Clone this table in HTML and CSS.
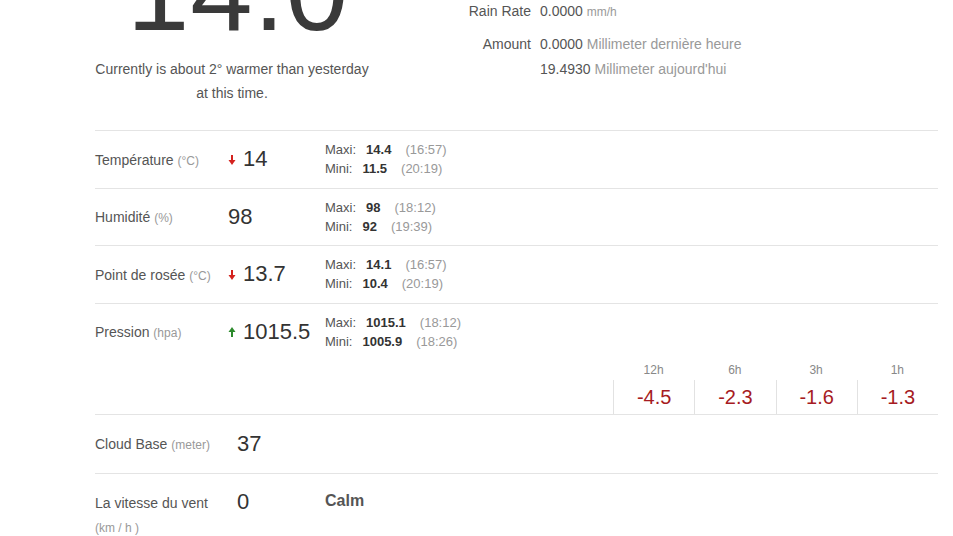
FILE: index.html
```html
<!DOCTYPE html>
<html lang="fr">
<head>
<meta charset="utf-8">
<title>Station météo</title>
<link rel="stylesheet" href="styles.css">
</head>
<body>
<div class="page">
  <section class="top">
    <div class="now">
      <div class="big">14.0</div>
      <p class="compare">Currently is about 2° warmer than yesterday<br>at this time.</p>
    </div>
    <div class="rain">
      <div class="rain-row rain-first"><span class="rlabel">Rain Rate</span><span class="rval">0.0000 <span class="unit">mm/h</span></span></div>
      <div class="rain-row rain-gap"><span class="rlabel">Amount</span><span class="rval">0.0000 <span class="unit-l">Millimeter dernière heure</span></span></div>
      <div class="rain-row"><span class="rlabel"></span><span class="rval">19.4930 <span class="unit-l">Millimeter aujourd'hui</span></span></div>
    </div>
  </section>

  <div class="row">
    <div class="label">Température <span class="unit">(°C)</span></div>
    <div class="value"><svg class="arrow down" width="8" height="10" viewBox="0 0 8 10"><path d="M4 0v5.5" stroke="currentColor" stroke-width="2"/><path d="M0.5 5h7L4 10z" fill="currentColor"/></svg>14</div>
    <div class="mm">
      <div>Maxi:<b>14.4</b><span class="time">(16:57)</span></div>
      <div>Mini:<b>11.5</b><span class="time">(20:19)</span></div>
    </div>
  </div>

  <div class="row">
    <div class="label">Humidité <span class="unit">(%)</span></div>
    <div class="value">98</div>
    <div class="mm">
      <div>Maxi:<b>98</b><span class="time">(18:12)</span></div>
      <div>Mini:<b>92</b><span class="time">(19:39)</span></div>
    </div>
  </div>

  <div class="row">
    <div class="label">Point de rosée <span class="unit">(°C)</span></div>
    <div class="value"><svg class="arrow down" width="8" height="10" viewBox="0 0 8 10"><path d="M4 0v5.5" stroke="currentColor" stroke-width="2"/><path d="M0.5 5h7L4 10z" fill="currentColor"/></svg>13.7</div>
    <div class="mm">
      <div>Maxi:<b>14.1</b><span class="time">(16:57)</span></div>
      <div>Mini:<b>10.4</b><span class="time">(20:19)</span></div>
    </div>
  </div>

  <div class="row row-pressure">
    <div class="label">Pression <span class="unit">(hpa)</span></div>
    <div class="value"><svg class="arrow up" width="8" height="10" viewBox="0 0 8 10"><path d="M4 4.5V10" stroke="currentColor" stroke-width="2"/><path d="M0.5 5h7L4 0z" fill="currentColor"/></svg>1015.5</div>
    <div class="mm">
      <div>Maxi:<b>1015.1</b><span class="time">(18:12)</span></div>
      <div>Mini:<b>1005.9</b><span class="time">(18:26)</span></div>
    </div>
    <div class="trend">
      <div class="th">12h</div><div class="th">6h</div><div class="th">3h</div><div class="th">1h</div>
      <div class="td">-4.5</div><div class="td">-2.3</div><div class="td">-1.6</div><div class="td">-1.3</div>
    </div>
  </div>

  <div class="row row-cloud">
    <div class="label">Cloud Base <span class="unit">(meter)</span></div>
    <div class="value value-in">37</div>
    <div class="mm"></div>
  </div>

  <div class="row row-wind">
    <div class="label label-wind">La vitesse du vent<br><span class="unit">(km / h )</span></div>
    <div class="value value-in">0</div>
    <div class="calm">Calm</div>
  </div>
</div>
</body>
</html>
```

FILE: styles.css
```css
html, body {
  margin: 0;
  padding: 0;
  background: #fff;
}

body {
  font-family: "Liberation Sans", Arial, sans-serif;
  color: #555;
  overflow: hidden;
}

.page {
  margin-left: 95px;
  width: 843px;
}

.top {
  display: flex;
  height: 130px;
}

.now {
  width: 274px;
  text-align: center;
}

.big {
  font-size: 112px;
  line-height: 112px;
  margin-top: -64px;
  padding-left: 12px;
  color: #3a3a3a;
  letter-spacing: 1px;
}

.compare {
  margin: 9px 0 0;
  font-size: 14px;
  line-height: 24px;
  color: #555;
}

.rain {
  margin-left: 82px;
  margin-top: -1px;
  font-size: 14px;
  line-height: 25px;
}

.rain-row {
  display: flex;
}

.rain-gap {
  margin-top: 7px;
}

.rlabel {
  width: 80px;
  text-align: right;
  margin-right: 9px;
  color: #555;
}

.rval {
  color: #555;
}

.rain .unit {
  font-size: 12px;
  color: #999;
}

.unit-l {
  color: #999;
}

.row {
  display: grid;
  grid-template-columns: 133px 97px 1fr;
  align-items: center;
  min-height: 38px;
  padding: 9px 0 9.5px;
  border-top: 1px solid #e4e4e4;
}

.label {
  font-size: 14px;
  line-height: 19px;
  color: #555;
  padding-top: 3px;
}

.label .unit {
  font-size: 12px;
  color: #999;
}

.value {
  display: flex;
  align-items: center;
  font-size: 22px;
  line-height: 38px;
  color: #333;
}

.value-in {
  padding-left: 9px;
}

.arrow {
  margin-right: 7px;
  margin-top: 1px;
}

.arrow.down {
  color: #d4221e;
}

.arrow.up {
  color: #2c8a2c;
}

.mm {
  font-size: 13px;
  line-height: 19px;
  color: #555;
}

.mm b {
  color: #333;
  margin-left: 10px;
}

.time {
  color: #999;
  margin-left: 14px;
}

.row-pressure {
  padding-bottom: 0;
}

.trend {
  grid-column: 1 / -1;
  justify-self: end;
  display: grid;
  grid-template-columns: repeat(4, 81.25px);
  margin-top: 11px;
}

.th {
  text-align: center;
  font-size: 12px;
  line-height: 16px;
  color: #888;
  margin-bottom: 2px;
}

.td {
  text-align: center;
  font-size: 20px;
  line-height: 34px;
  color: #a61b22;
  border-left: 1px solid #e2e2e2;
}

.row-cloud {
  padding: 10px 0 10.5px;
}

.row-wind {
  align-items: start;
}

.label-wind {
  line-height: 24px;
  padding-top: 8px;
}

.calm {
  font-size: 16px;
  font-weight: bold;
  line-height: 36px;
  color: #555;
}
```
